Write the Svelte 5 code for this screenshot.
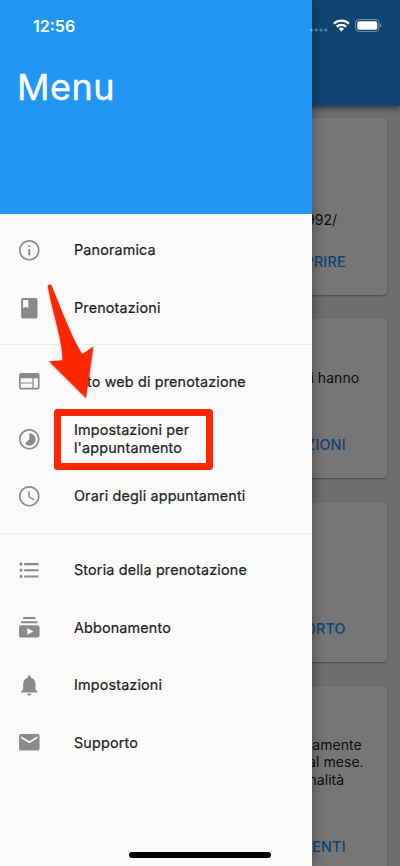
<script lang="ts">
    type Item = { icon: string, label: string };
    type Line = { text: string, end: number };
    type Card = { height: number, gap: number, lines: Line[], action: string };

    const groups: Item[][] = [
        [
            { icon: 'info', label: 'Panoramica' },
            { icon: 'book', label: 'Prenotazioni' }
        ],
        [
            { icon: 'web', label: 'Sito web di prenotazione' },
            { icon: 'timelapse', label: "Impostazioni per l'appuntamento" },
            { icon: 'clock', label: 'Orari degli appuntamenti' }
        ],
        [
            { icon: 'list', label: 'Storia della prenotazione' },
            { icon: 'subscriptions', label: 'Abbonamento' },
            { icon: 'bell', label: 'Impostazioni' },
            { icon: 'mail', label: 'Supporto' }
        ]
    ];

    // Material icons, 24x24
    const icons: Record<string, string> = {
        info: 'M11.1 7h1.8v1.9h-1.8zm0 3.8h1.8V17h-1.8zM12 2C6.48 2 2 6.48 2 12s4.48 10 10 10 10-4.48 10-10S17.52 2 12 2zM12 20.4c-4.64 0-8.4-3.76-8.4-8.4S7.36 3.6 12 3.6s8.4 3.76 8.4 8.4-3.76 8.4-8.4 8.4z',
        book: 'M18 2H6c-1.1 0-2 .9-2 2v16c0 1.1.9 2 2 2h12c1.1 0 2-.9 2-2V4c0-1.1-.9-2-2-2zM6 4h5v8l-2.5-1.5L6 12V4z',
        web: 'M20 4H4c-1.1 0-1.99.9-1.99 2L2 18c0 1.1.9 2 2 2h16c1.1 0 2-.9 2-2V6c0-1.1-.9-2-2-2zm-5 14.4H3.6v-4.2H15v4.2zm0-5.3H3.6V9H15v4.1zm5.4 5.3h-4.2V9h4.2v9.4z',
        timelapse: 'M16.24 7.76C15.07 6.59 13.54 6 12 6v6l-4.24 4.24c2.34 2.34 6.14 2.34 8.49 0 2.34-2.34 2.34-6.14-.01-8.48zM12 2C6.48 2 2 6.48 2 12s4.48 10 10 10 10-4.48 10-10S17.52 2 12 2zM12 20.4c-4.64 0-8.4-3.76-8.4-8.4S7.36 3.6 12 3.6s8.4 3.76 8.4 8.4-3.76 8.4-8.4 8.4z',
        clock: 'M11.99 2C6.47 2 2 6.48 2 12s4.47 10 9.99 10C17.52 22 22 17.52 22 12S17.52 2 11.99 2zM12 20.4c-4.64 0-8.4-3.76-8.4-8.4S7.36 3.6 12 3.6s8.4 3.76 8.4 8.4-3.76 8.4-8.4 8.4zM12.5 7H11v6l5.25 3.15.75-1.23-4.5-2.67z',
        list: 'M4 10.5c-.83 0-1.5.67-1.5 1.5s.67 1.5 1.5 1.5 1.5-.67 1.5-1.5-.67-1.5-1.5-1.5zm0-6c-.83 0-1.5.67-1.5 1.5S3.17 7.5 4 7.5 5.5 6.83 5.5 6 4.83 4.5 4 4.5zm0 12c-.83 0-1.5.68-1.5 1.5s.68 1.5 1.5 1.5 1.5-.68 1.5-1.5-.67-1.5-1.5-1.5zM7 19h14v-2H7v2zm0-6h14v-2H7v2zm0-8v2h14V5H7z',
        subscriptions: 'M20 8H4V6h16v2zm-2-6H6v2h12V2zm4 10v8c0 1.1-.9 2-2 2H4c-1.1 0-2-.9-2-2v-8c0-1.1.9-2 2-2h16c1.1 0 2 .9 2 2zm-6 4l-6-3.27v6.53L16 16z',
        bell: 'M12 22c1.1 0 2-.9 2-2h-4c0 1.1.89 2 2 2zm6-6v-5c0-3.07-1.64-5.64-4.5-6.32V4c0-.83-.67-1.5-1.5-1.5s-1.5.67-1.5 1.5v.68C7.63 5.36 6 7.92 6 11v5l-2 2v1h16v-1l-2-2z',
        mail: 'M20 4H4c-1.1 0-1.99.9-1.99 2L2 18c0 1.1.9 2 2 2h16c1.1 0 2-.9 2-2V6c0-1.1-.9-2-2-2zm0 4l-8 5-8-5V6l8 5 8-5v2z'
    };

    const cards: Card[] = [
        { height: 176.5, gap: 24, lines: [{ text: '1992/', end: 50 }], action: 'APRIRE' },
        { height: 159, gap: 50, lines: [{ text: 'i hanno', end: 28 }], action: 'PRENOTAZIONI' },
        { height: 159, gap: 50, lines: [], action: 'SUPPORTO' },
        {
            height: 194,
            gap: 50.3,
            lines: [
                { text: 'amente', end: 25.5 },
                { text: 'al mese.', end: 23.5 },
                { text: 'nalità', end: 43 }
            ],
            action: 'APPUNTAMENTI'
        }
    ];

    let selected = $state('Panoramica');
</script>

<div class="screen">
    <div class="page">
        <div class="app-bar"></div>
        <div class="cards">
            {#each cards as card}
                <div class="card" style="height: {card.height}px">
                    <div class="card-text" style="margin-bottom: {card.gap}px">
                        {#each card.lines as line}
                            <div style="padding-right: {line.end}px">{line.text}</div>
                        {/each}
                    </div>
                    <div class="card-action">{card.action}</div>
                </div>
            {/each}
        </div>
    </div>

    <div class="scrim"></div>

    <div class="drawer">
        <header>
            <h1>Menu</h1>
        </header>
        <nav>
            {#each groups as group, i}
                {#if i > 0}
                    <div class="divider"></div>
                {/if}
                {#each group as item}
                    <button onclick={() => selected = item.label}>
                        <svg viewBox="0 0 24 24"><path d={icons[item.icon]} /></svg>
                        <span>{item.label}</span>
                    </button>
                {/each}
            {/each}
        </nav>
    </div>

    <div class="status">
        <span class="time">12:56</span>
        <svg class="signals" width="80" height="20" viewBox="0 0 80 20">
            <g fill="#fff" opacity=".3">
                <circle cx="1.5" cy="14" r="1.6" />
                <circle cx="6.3" cy="14" r="1.6" />
                <circle cx="11.1" cy="14" r="1.6" />
                <circle cx="15.8" cy="14" r="1.6" />
            </g>
            <g fill="none" stroke="#fff" stroke-width="2.3">
                <path d="M23.9 7.6a11 11 0 0 1 15 0" />
                <path d="M26.7 10.6a7 7 0 0 1 9.4 0" />
            </g>
            <path fill="#fff" d="M28.8 12.8a3.8 3.8 0 0 1 5.2 0l-2.6 2.7z" />
            <rect x="45.6" y="3.5" width="23.4" height="12" rx="3.6" fill="none" stroke="#fff" stroke-opacity=".4" />
            <rect x="47.3" y="5.2" width="20" height="8.6" rx="2" fill="#fff" />
            <path fill="#fff" fill-opacity=".45" d="M70.2 7.5c1.6.6 1.6 3.4 0 4z" />
        </svg>
    </div>

    <div class="highlight"></div>
    <svg class="arrow" width="60" height="126" viewBox="42 278 60 126">
        <path d="M47.8 286.5C47.4 284.3 50.6 283.6 51.6 285.5C60 306 72 338 82.3 354L93.4 346.6L86 398L49 361.2L62.5 360.2C62.5 340 53 315 47.8 286.5Z" />
    </svg>
    <div class="home"></div>
</div>

<style>
    :global(body) { margin: 0; }

    .screen {
        position: relative;
        width: 400px;
        height: 866px;
        overflow: hidden;
        font-family: Inter, "Liberation Sans", sans-serif;
        font-size: 14.36px;
    }

    .page { height: 100%; background: #ededed; }
    .app-bar {
        position: relative;
        height: 106px;
        background: #2196f3;
        box-shadow: 0 2px 4px rgba(0,0,0,0.3), 0 4px 6px rgba(0,0,0,0.16);
    }

    .cards {
        display: flex;
        flex-direction: column;
        gap: 24.6px;
        padding: 12px 12.8px;
    }
    .card {
        display: flex;
        flex-direction: column;
        justify-content: flex-end;
        flex-shrink: 0;
        box-sizing: border-box;
        padding-bottom: 24px;
        border-radius: 4px;
        background: #fff;
        text-align: right;
        box-shadow: 0 1px 2px rgba(0,0,0,0.35);
    }
    .card-text {
        color: #212121;
        font-size: 14px;
        line-height: 17.3px;
        letter-spacing: 0.05px;
    }
    .card-action {
        padding-right: 41.5px;
        color: #2196f3;
        font-weight: 500;
        line-height: 18px;
        letter-spacing: 0.15px;
    }

    .scrim { position: absolute; inset: 0; background: rgba(0,0,0,0.54); }

    .drawer {
        position: absolute;
        top: 0;
        left: 0;
        width: 311.6px;
        height: 100%;
        background: #fafafa;
        box-shadow: 2px 0 10px rgba(0,0,0,0.3);
    }
    header {
        box-sizing: border-box;
        height: 213.5px;
        padding: 66px 17px 0;
        background: #2196f3;
    }
    h1 {
        margin: 0;
        color: #fff;
        font-size: 36px;
        font-weight: 400;
        line-height: 42px;
        letter-spacing: 0.5px;
        -webkit-text-stroke: 0.4px #fff;
    }

    nav { display: flex; flex-direction: column; padding-top: 8.2px; }
    nav button {
        display: flex;
        align-items: center;
        gap: 32.8px;
        height: 57.44px;
        padding: 0 32px 0 16.6px;
        border: 0;
        background: transparent;
        color: #212121;
        font: inherit;
        line-height: 17.5px;
        letter-spacing: 0.16px;
        text-align: left;
        -webkit-text-stroke: 0.2px #212121;
        cursor: pointer;
    }
    nav span { padding-bottom: 0.7px; }
    nav svg { width: 24.6px; height: 24.6px; flex-shrink: 0; fill: #8a8a8a; }
    .divider { height: 1px; margin: 7.7px 0; background: #ececec; }

    .status {
        position: absolute;
        top: 16px;
        left: 33px;
        right: 10px;
        display: flex;
        justify-content: space-between;
        color: #fff;
    }
    .time { font-size: 16px; font-weight: 600; line-height: 20px; }

    .highlight {
        position: absolute;
        top: 409px;
        left: 54px;
        width: 159px;
        height: 61.3px;
        box-sizing: border-box;
        border: 7px solid #ff2600;
        border-radius: 3.5px;
        box-shadow: 0 0 1px rgba(0,0,0,0.2);
    }
    .arrow {
        position: absolute;
        top: 278px;
        left: 42px;
        fill: #ff2600;
        filter: drop-shadow(0 1px 1px rgba(0,0,0,0.35));
    }
    .home {
        position: absolute;
        bottom: 8.3px;
        left: 129px;
        width: 142px;
        height: 5.3px;
        border-radius: 3px;
        background: #000;
    }
</style>
